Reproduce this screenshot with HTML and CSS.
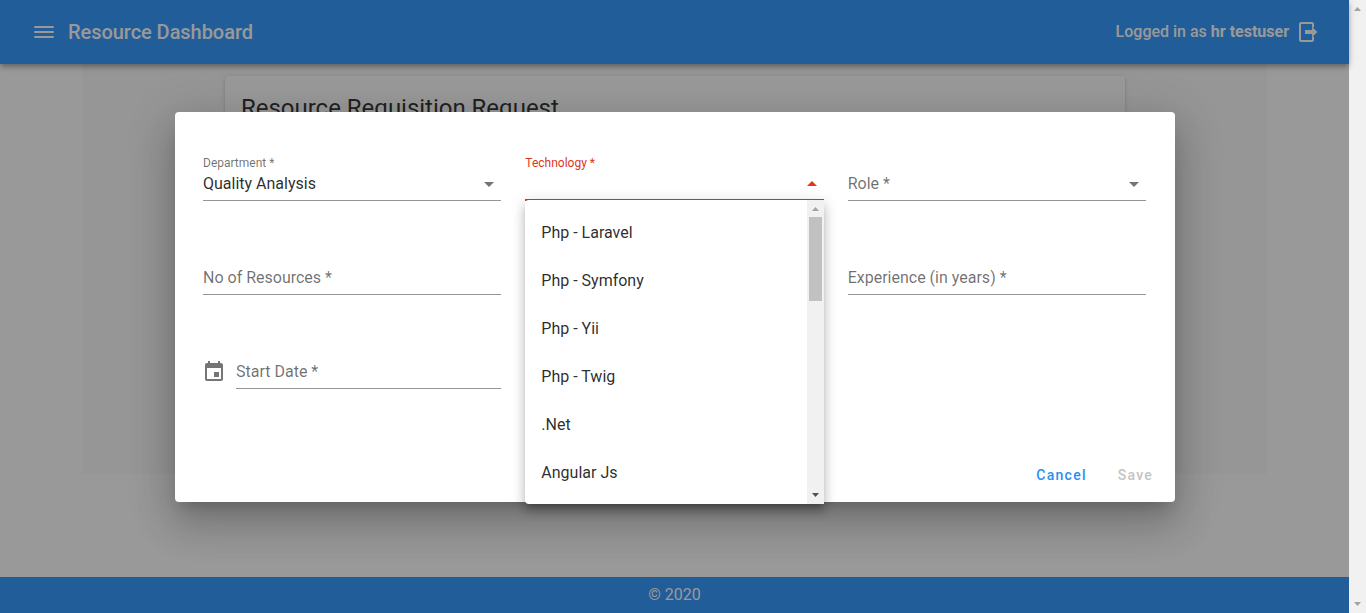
FILE: index.html
```
<!DOCTYPE html>
<html lang="en">
<head>
<meta charset="utf-8">
<title>Resource Dashboard</title>
<link rel="stylesheet" href="styles.css">
</head>
<body>
<div class="page">
  <header class="topbar">
    <svg class="menu-icon" viewBox="0 0 24 24"><path d="M2.300 6h19.400v2H2.300zm0 5h19.400v2H2.300zm0 5h19.400v2H2.300z"/></svg>
    <h1 class="brand">Resource Dashboard</h1>
    <span class="user">Logged in as <b>hr testuser</b></span>
    <svg class="logout-icon" viewBox="0 0 21 22"><path d="M15 6.500V3c0-.6-.4-1-1-1H3c-.6 0-1 .4-1 1v16c0 .6.4 1 1 1h11c.6 0 1-.4 1-1v-3.500" fill="none" stroke="#fff" stroke-width="2"/><path d="M7 9h7V6l5.500 5-5.500 5v-3H7z"/></svg>
  </header>
  <main class="content">
    <section class="panel">
      <div class="card"><h2 class="card-title">Resource Requisition Request</h2></div>
    </section>
  </main>
  <footer class="footer">© 2020</footer>
  <div class="overlay"></div>
</div>
<div class="scrollbar">
  <svg class="arrow" viewBox="0 0 7 4"><path d="M0 4h7L3.500 0z"/></svg>
  <svg class="arrow" viewBox="0 0 7 4"><path d="M0 0h7L3.500 4z"/></svg>
</div>

<div class="dialog">
  <form class="form">
    <div class="field">
      <label class="label">Department *</label>
      <div class="control filled">Quality Analysis<svg class="caret" viewBox="0 0 10 5"><path d="M0 0h10L5 5z"/></svg></div>
    </div>
    <div class="field active">
      <label class="label">Technology *</label>
      <div class="control"><svg class="caret" viewBox="0 0 10 5"><path d="M0 5h10L5 0z"/></svg></div>
      <div class="menu">
        <ul class="options">
          <li class="option">Php - Laravel</li>
          <li class="option">Php - Symfony</li>
          <li class="option">Php - Yii</li>
          <li class="option">Php - Twig</li>
          <li class="option">.Net</li>
          <li class="option">Angular Js</li>
        </ul>
        <div class="menu-scroll">
          <svg class="arrow" viewBox="0 0 7 4"><path d="M0 4h7L3.500 0z"/></svg>
          <div class="thumb"></div>
          <svg class="arrow dark" viewBox="0 0 7 4"><path d="M0 0h7L3.500 4z"/></svg>
        </div>
      </div>
    </div>
    <div class="field">
      <div class="control">Role *<svg class="caret" viewBox="0 0 10 5"><path d="M0 0h10L5 5z"/></svg></div>
    </div>
    <div class="field"><div class="control">No of Resources *</div></div>
    <div class="field"></div>
    <div class="field"><div class="control">Experience (in years) *</div></div>
    <div class="field dated">
      <svg class="date-icon" viewBox="0 0 24 24"><path d="M17 12h-5v5h5v-5zM16 1v2H8V1H6v2H5c-1.110 0-1.990.9-1.990 2L3 19c0 1.100.89 2 2 2h14c1.100 0 2-.9 2-2V5c0-1.100-.9-2-2-2h-1V1h-2zm3 18H5V8h14v11z"/></svg>
      <div class="control">Start Date *</div>
    </div>
  </form>
  <div class="actions">
    <span class="cancel">Cancel</span>
    <span class="save">Save</span>
  </div>
</div>
</body>
</html>
```
FILE: styles.css
```
* { box-sizing: border-box; }
body {
  margin: 0;
  height: 613px;
  display: flex;
  overflow: hidden;
  position: relative;
  font-family: Roboto, "Liberation Sans", sans-serif;
  font-size: 16px;
}
svg { display: block; flex: none; }
.page {
  width: 1349px;
  height: 613px;
  display: flex;
  flex-direction: column;
  position: relative;
}
.topbar {
  height: 64px;
  flex: none;
  display: flex;
  align-items: center;
  padding: 0 30px 0 32px;
  background: #369bff;
  color: #fff;
  box-shadow: 0 2px 4px -1px rgba(0,0,0,.2), 0 4px 5px rgba(0,0,0,.14), 0 1px 10px rgba(0,0,0,.12);
  z-index: 1;
}
.menu-icon { width: 24px; height: 24px; fill: #fff; }
.brand { margin: 0 auto 0 12px; font-size: 20px; font-weight: 500; line-height: 24px; letter-spacing: -.05px; }
.user { font-weight: 500; margin-right: 9px; padding-bottom: 2px; }
.user b { font-weight: 700; }
.logout-icon { width: 21px; height: 22px; fill: #fff; }
.content { flex: 1; padding: 0 82px; background: #fff; }
.panel { height: 410px; padding: 12px 142px 0 143px; background: #fafafa; }
.card {
  height: 380px;
  padding: 16px;
  border-radius: 4px;
  background: #fff;
  box-shadow: 0 3px 1px -2px rgba(0,0,0,.2), 0 2px 2px rgba(0,0,0,.14), 0 1px 5px rgba(0,0,0,.12);
}
.card-title { margin: 0; font-size: 24px; font-weight: 400; line-height: 32px; letter-spacing: -.02px; color: rgba(0,0,0,.8); }
.footer {
  height: 36px;
  flex: none;
  background: #369bff;
  color: #fff;
  text-align: center;
  line-height: 35px;
  z-index: 1;
}
.overlay { position: absolute; inset: 0; background: rgba(0,0,0,.4); z-index: 2; }
.scrollbar {
  width: 17px;
  background: #f1f1f1;
  display: flex;
  flex-direction: column;
  justify-content: space-between;
  align-items: center;
  padding: 7px 0;
}
.arrow { width: 7px; height: 4px; fill: #a3a3a3; }
.arrow.dark { fill: #505050; }
.dialog {
  position: absolute;
  left: 175px;
  top: 112px;
  width: 1000px;
  height: 390px;
  z-index: 3;
  padding: 0 29px 0 28px;
  border-radius: 4px;
  background: #fff;
  box-shadow: 0 11px 15px -7px rgba(0,0,0,.2), 0 24px 38px 3px rgba(0,0,0,.14), 0 9px 46px 8px rgba(0,0,0,.12);
}
.form {
  display: grid;
  grid-template-columns: repeat(3, 1fr);
  grid-template-rows: 89px 94px 94px;
  column-gap: 24px;
}
.field {
  position: relative;
  display: flex;
  flex-direction: column;
  justify-content: flex-end;
  color: rgba(0,0,0,.57);
}
.label { font-size: 12px; line-height: 14px; margin-bottom: -1px; }
.control {
  height: 32px;
  flex: none;
  display: flex;
  align-items: center;
  justify-content: space-between;
  padding: 0 7px 3px 0;
  border-bottom: 1px solid #949494;
}
.filled { color: rgba(0,0,0,.84); }
.caret { width: 10px; height: 5px; fill: #757575; margin-top: 3px; }
.active .label { color: #dd3720; }
.active .control { border-bottom: 2px solid #dd3720; justify-content: flex-end; }
.active .caret { fill: #dd3720; margin-top: 2px; }
.dated { flex-direction: row; align-items: flex-end; justify-content: flex-start; gap: 10px; }
.dated .control { flex: 1; }
.date-icon { width: 24px; height: 24px; fill: #757575; margin: 0 0 5px -1px; }
.menu {
  position: absolute;
  left: 0;
  right: 0;
  top: 88px;
  height: 304px;
  display: flex;
  background: #fff;
  border-radius: 4px 0 0 4px;
  overflow: hidden;
  z-index: 4;
  box-shadow: 0 5px 5px -3px rgba(0,0,0,.2), 0 8px 10px 1px rgba(0,0,0,.14), 0 3px 14px 2px rgba(0,0,0,.12);
}
.options { flex: 1; margin: 0; padding: 9px 0 7px; list-style: none; }
.option { height: 48px; line-height: 48px; padding-left: 16px; color: rgba(0,0,0,.84); }
.menu-scroll {
  width: 17px;
  background: #f1f1f1;
  display: flex;
  flex-direction: column;
  align-items: center;
  padding: 7px 0;
}
.thumb { width: 13px; height: 84px; margin: 6px 0 auto; background: #c1c1c1; }
.actions {
  display: flex;
  justify-content: flex-end;
  gap: 31px;
  margin-top: 77px;
  margin-right: -7px;
  font-size: 14px;
  font-weight: 500;
  line-height: 18px;
  letter-spacing: 1.25px;
}
.cancel { color: #2a8ff0; }
.save { color: #c4c4c4; }
```
